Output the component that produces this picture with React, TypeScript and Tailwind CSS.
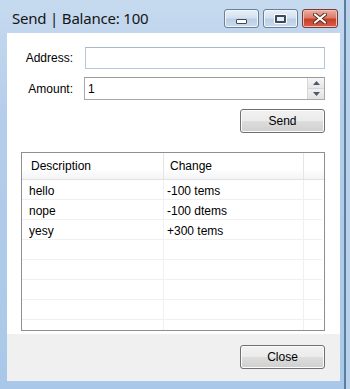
import React from "react";

const rows = [
  { d: "hello", c: "-100 tems" },
  { d: "nope", c: "-100 dtems" },
  { d: "yesy", c: "+300 tems" },
  { d: "", c: "" },
  { d: "", c: "" },
  { d: "", c: "" },
  { d: "", c: "" },
  { d: "", c: "" },
];

const ms = { fontFamily: '"Liberation Sans", Arial, sans-serif' };

function WinButton({ children }: { children: React.ReactNode }) {
  return (
    <button
      className="w-[85px] h-[24px] rounded-[3px] border border-[#707070] text-[12px] text-black flex items-center justify-center bg-[linear-gradient(to_bottom,#f2f2f2_0%,#ebebeb_48%,#dddddd_52%,#cfcfcf_100%)] shadow-[inset_0_0_0_1px_#fbfbfb]"
      style={ms}
    >
      {children}
    </button>
  );
}

export default function App() {
  return (
    <div className="w-[350px] h-[389px] flex bg-[#b9d1ea] overflow-hidden">
      <div className="w-[346px] h-full flex flex-col bg-[linear-gradient(to_bottom,#c6daef_0%,#b4cdea_30%,#a9c8e9_100%)] border-r-[2px] border-[#5a7f9c]">
        {/* Title bar */}
        <div className="h-[33px] flex items-start shrink-0">
          <div
            className="pl-[12px] pt-[8px] text-[15px] text-[#151515] leading-[20px] tracking-[-0.2px]"
            style={{ fontFamily: '"Noto Sans", "Open Sans", sans-serif' }}
          >
            Send | Balance: 100
          </div>
          <div className="ml-auto mt-[9px] mr-[6px] flex gap-[4px]">
            <div className="w-[35px] h-[19px] rounded-[3px] border border-[#6d7f96] bg-[linear-gradient(to_bottom,#e8f0f8_0%,#d3e1f0_45%,#bccfe4_55%,#c9dbee_100%)] shadow-[inset_0_0_0_1px_#f0f5fb] flex items-end justify-center pb-[3px]">
              <div className="w-[11px] h-[5px] bg-white border border-[#3d4a5a] rounded-[1px]" />
            </div>
            <div className="w-[35px] h-[19px] rounded-[3px] border border-[#6d7f96] bg-[linear-gradient(to_bottom,#e8f0f8_0%,#d3e1f0_45%,#bccfe4_55%,#c9dbee_100%)] shadow-[inset_0_0_0_1px_#f0f5fb] flex items-center justify-center">
              <div className="w-[11px] h-[8px] border-[2px] border-[#3d4a5a] bg-[#e8eef5] rounded-[1px] shadow-[0_0_0_1px_#ffffff]" />
            </div>
            <div className="w-[36px] h-[19px] rounded-[3px] border border-[#7d3a32] bg-[linear-gradient(to_bottom,#eab0a3_0%,#dc7b68_45%,#c8402a_55%,#d4604a_100%)] shadow-[inset_0_0_0_1px_#f0c0b4] flex items-center justify-center">
              <svg width="14" height="11" viewBox="0 0 14 11">
                <path d="M2 1.5 L12 9.5 M12 1.5 L2 9.5" stroke="#5a2a22" strokeWidth="4" strokeLinecap="round" />
                <path d="M2 1.5 L12 9.5 M12 1.5 L2 9.5" stroke="#ffffff" strokeWidth="2.2" strokeLinecap="round" />
              </svg>
            </div>
          </div>
        </div>

        {/* Client area */}
        <div className="ml-[7px] mr-[4px] mb-[8px] flex-1 flex flex-col bg-white" style={ms}>
          <div className="flex-1 flex flex-col pl-[14px] pr-[15px] pt-[14px]">
            <div className="flex items-center h-[22px]">
              <div className="w-[52px] text-right text-[12px] text-black">Address:</div>
              <div className="ml-[12px] flex-1 h-[22px] border border-[#b4c8dc] border-t-[#a5b8cc] bg-white" />
            </div>
            <div className="flex items-center h-[23px] mt-[8px]">
              <div className="w-[52px] text-right text-[12px] text-black">Amount:</div>
              <div className="ml-[11px] flex-1 h-[23px] border border-[#a8a8a8] border-t-[#9a9a9a] bg-white flex items-center">
                <div className="flex-1 pl-[3px] text-[12px] text-black">1</div>
                <div className="w-[17px] h-[21px] flex flex-col border-l border-[#d6d6d6]">
                  <div className="flex-1 flex items-center justify-center border-b border-[#d6d6d6] bg-[linear-gradient(to_bottom,#f6f6f6,#e6e6e6)]">
                    <svg width="7" height="4" viewBox="0 0 7 4"><path d="M0 4 L3.5 0 L7 4 Z" fill="#4a5a6a" /></svg>
                  </div>
                  <div className="flex-1 flex items-center justify-center bg-[linear-gradient(to_bottom,#f0f0f0,#e2e2e2)]">
                    <svg width="7" height="4" viewBox="0 0 7 4"><path d="M0 0 L3.5 4 L7 0 Z" fill="#4a5a6a" /></svg>
                  </div>
                </div>
              </div>
            </div>
            <div className="flex justify-end mt-[9px]">
              <WinButton>Send</WinButton>
            </div>

            {/* List view */}
            <div className="mt-[19px] h-[179px] border border-[#8f8f8f] flex flex-col overflow-hidden">
              <div className="h-[27px] shrink-0 flex border-b border-[#e2e2e2] bg-[linear-gradient(to_bottom,#ffffff_0%,#ffffff_60%,#f3f4f6_100%)] text-[12px] text-black">
                <div className="w-[142px] pl-[9px] flex items-center border-r border-[#e5e5e5]">Description</div>
                <div className="w-[140px] pl-[6px] flex items-center border-r border-[#e5e5e5]">Change</div>
                <div className="flex-1" />
              </div>
              <div className="flex-1 overflow-hidden">
                {rows.map((r, i) => (
                  <div key={i} className="h-[20px] flex border-b border-[#f0f0f0] text-[12px] text-black mr-[2px]">
                    <div className="w-[142px] pl-[7px] pt-[2px] flex items-center border-r border-[#f0f0f0]">{r.d}</div>
                    <div className="w-[140px] pl-[3px] pt-[2px] flex items-center border-r border-[#f0f0f0]">{r.c}</div>
                    <div className="flex-1" />
                  </div>
                ))}
              </div>
            </div>
          </div>
          <div className="h-[47px] mt-[3px] bg-[#f0f0f0] flex items-start justify-end pr-[15px] pt-[11px]">
            <WinButton>Close</WinButton>
          </div>
        </div>
      </div>
    </div>
  );
}
